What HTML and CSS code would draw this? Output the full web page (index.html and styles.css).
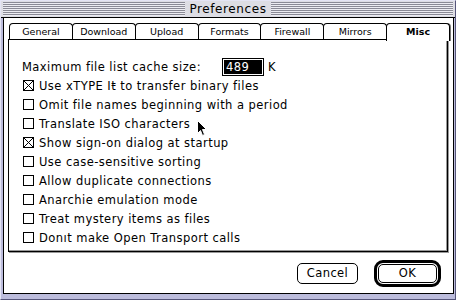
FILE: index.html
```html
<!DOCTYPE html>
<html>
<head>
<meta charset="utf-8">
<link rel="stylesheet" href="styles.css">
</head>
<body>
<div class="window">
  <div class="titlebar">
    <div class="stripes"></div>
    <div class="title">Preferences</div>
    <div class="stripes"></div>
  </div>
  <div class="frame">
    <div class="tabs">
      <div class="tab">General</div>
      <div class="tab">Download</div>
      <div class="tab">Upload</div>
      <div class="tab">Formats</div>
      <div class="tab">Firewall</div>
      <div class="tab">Mirrors</div>
      <div class="tab active">Misc</div>
    </div>
    <div class="panel">
      <div class="row field-row">
        <span class="label">Maximum file list cache size:</span>
        <span class="field"><span class="field-inner">489</span></span>
        <span class="unit">K</span>
      </div>
      <div class="row"><span class="cb checked"></span>Use xTYPE Iŧ to transfer binary files</div>
      <div class="row"><span class="cb"></span>Omit file names beginning with a period</div>
      <div class="row"><span class="cb"></span>Translate ISO characters</div>
      <div class="row"><span class="cb checked"></span>Show sign-on dialog at startup</div>
      <div class="row"><span class="cb"></span>Use case-sensitive sorting</div>
      <div class="row"><span class="cb"></span>Allow duplicate connections</div>
      <div class="row"><span class="cb"></span>Anarchie emulation mode</div>
      <div class="row"><span class="cb"></span>Treat mystery items as files</div>
      <div class="row"><span class="cb"></span>Donıt make Open Transport calls</div>
    </div>
    <div class="buttons">
      <div class="btn cancel">Cancel</div>
      <div class="default-ring"><div class="btn ok">OK</div></div>
    </div>
  </div>
  <svg class="cursor" width="11" height="17" viewBox="0 0 11 17"><path d="M0.5 0.5 L0.5 13.5 L3.5 10.5 L5.5 15.5 L7.5 14.5 L5.5 9.5 L9.5 9.5 Z" fill="#000" stroke="#fff" stroke-width="1"/></svg>
</div>
</body>
</html>
```
FILE: styles.css
```css
html, body {
  margin: 0;
  padding: 0;
  background: #fff;
}
.window {
  position: relative;
  width: 456px;
  height: 300px;
  box-sizing: border-box;
  background: #bcbcdc;
  border-left: 1px solid #e4e4f4;
  border-top: 1px solid #e4e4f4;
  border-bottom: 1px solid #55557a;
  border-right: 1px solid #55557a;
  display: flex;
  flex-direction: column;
  font-family: "DejaVu Sans", sans-serif;
}
.titlebar {
  height: 16px;
  display: flex;
  align-items: center;
  background: #dddde4;
  border-bottom: 1px solid #000;
  padding: 0 2px;
}
.stripes {
  flex: 1;
  height: 14px;
  background: repeating-linear-gradient(to bottom, #8a8a96 0, #8a8a96 1px, #ececf2 1px, #ececf2 2px);
}
.title {
  padding: 0 4px;
  font-family: "DejaVu Sans", sans-serif;
  font-size: 12px;
  line-height: 16px;
  color: #000;
  letter-spacing: 0.6px;
}
.frame {
  flex: 1;
  margin: 0 1px 5px 2px;
  background: #fff;
  border-left: 1px solid #000;
  border-right: 1px solid #000;
  border-bottom: 1px solid #000;
  display: flex;
  flex-direction: column;
  padding: 5px 5px 0 4px;
}
.tabs {
  display: flex;
  height: 16px;
  padding-left: 1px;
  margin-right: -1px;
}
.tab {
  flex: 1;
  border: 1px solid #000;
  border-bottom: none;
  border-radius: 4px 4px 0 0;
  margin-right: -1px;
  font-family: "DejaVu Sans", sans-serif;
  font-size: 9.5px;
  line-height: 15px;
  text-align: center;
  background: #fff;
}
.tab.active {
  font-weight: bold;
  position: relative;
  z-index: 1;
  height: 17px;
  box-shadow: 1px 0 0 #777;
}
.panel {
  height: 213px;
  box-sizing: border-box;
  border: 1px solid #000;
  box-shadow: inset -1px -1px 0 #999, 1px 1px 0 #999;
  padding: 17px 0 0 13px;
  font-size: 11.5px;
  color: #000;
}
.row {
  height: 19px;
  display: flex;
  align-items: center;
  white-space: nowrap;
  letter-spacing: 0.45px;
}
.field-row .label {
  width: 200px;
}
.field {
  display: inline-flex;
  border: 1px solid #000;
  padding: 1px;
}
.field-inner {
  background: #000;
  color: #fff;
  width: 38px;
  height: 14px;
  line-height: 14px;
  padding-left: 2px;
  box-sizing: border-box;
}
.unit {
  margin-left: 4px;
}
.cb {
  width: 11px;
  height: 11px;
  box-sizing: border-box;
  border: 1px solid #000;
  margin: 0 5px 0 1px;
  flex: none;
}
.cb.checked {
  background:
    linear-gradient(45deg, transparent calc(50% - 0.7px), #000 calc(50% - 0.7px), #000 calc(50% + 0.7px), transparent calc(50% + 0.7px)),
    linear-gradient(-45deg, transparent calc(50% - 0.7px), #000 calc(50% - 0.7px), #000 calc(50% + 0.7px), transparent calc(50% + 0.7px));
}
.buttons {
  display: flex;
  justify-content: flex-end;
  align-items: center;
  gap: 16px;
  padding: 8px 7px 0 0;
}
.btn {
  font-size: 11.5px;
  text-align: center;
  border: 1px solid #000;
  border-radius: 5px;
  box-sizing: border-box;
  letter-spacing: 0.4px;
}
.cancel {
  width: 61px;
  height: 21px;
  line-height: 19px;
}
.default-ring {
  border: 3px solid #000;
  border-radius: 9px;
  padding: 1px;
  width: 67px;
  height: 27px;
  box-sizing: border-box;
}
.ok {
  width: 100%;
  height: 100%;
  line-height: 17px;
}
.cursor {
  position: absolute;
  left: 196px;
  top: 119px;
}
```
